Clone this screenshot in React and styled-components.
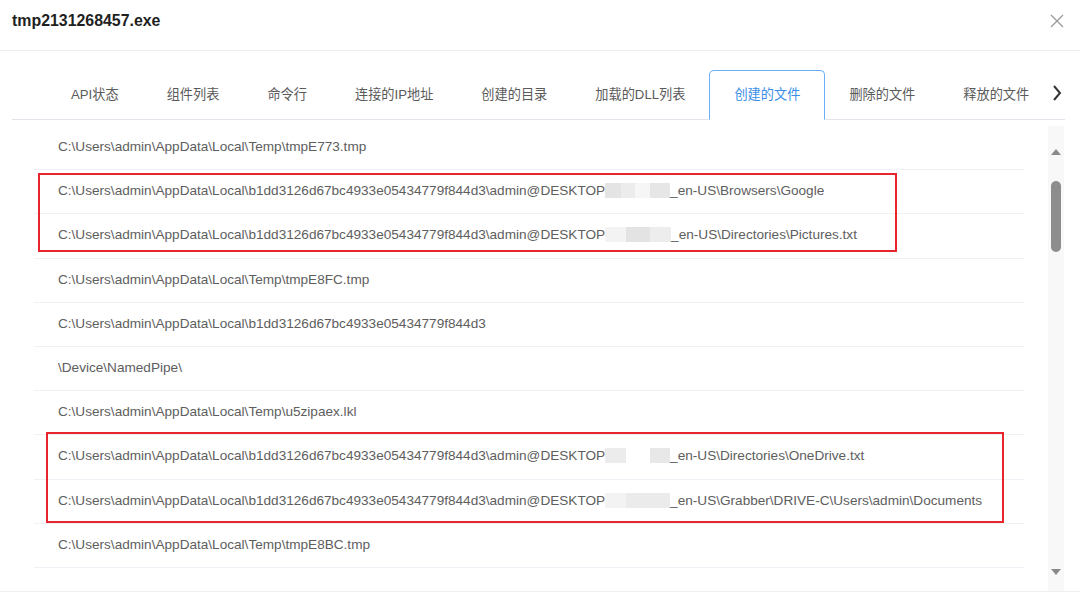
import React from "react";
import styled, { createGlobalStyle } from "styled-components";

const Global = createGlobalStyle`
  html, body { margin: 0; padding: 0; background: #fff; }
  body { font-family: "Liberation Sans", Arial, "Noto Sans CJK SC", sans-serif; }
  * { box-sizing: border-box; }
`;

const tabs = ["API状态", "组件列表", "命令行", "连接的IP地址", "创建的目录", "加载的DLL列表", "创建的文件", "删除的文件", "释放的文件"];
const ACTIVE = 6;

const base = "C:\\Users\\admin\\AppData\\Local\\";
const hash = base + "b1dd3126d67bc4933e05434779f844d3";
const desk = hash + "\\admin@DESKTOP";

const rows = [
  { text: base + "Temp\\tmpE773.tmp" },
  { text: desk, blur: [[16, "#e4e4e4"], [14, "#ececec"], [15, "#f6f6f6"], [20, "#e6e6e6"]], after: "_en-US\\Browsers\\Google" },
  { text: desk, blur: [[21, "#f3f3f3"], [24, "#e3e3e3"], [21, "#ededed"]], after: "_en-US\\Directories\\Pictures.txt" },
  { text: base + "Temp\\tmpE8FC.tmp" },
  { text: hash },
  { text: "\\Device\\NamedPipe\\" },
  { text: base + "Temp\\u5zipaex.lkl" },
  { text: desk, blur: [[21, "#ececec"], [24, "transparent"], [20, "#e8e8e8"]], after: "_en-US\\Directories\\OneDrive.txt" },
  { text: desk, blur: [[21, "#f3f3f3"], [44, "#ebebeb"]], after: "_en-US\\Grabber\\DRIVE-C\\Users\\admin\\Documents" },
  { text: base + "Temp\\tmpE8BC.tmp" },
];

const Page = styled.div`
  width: 1080px;
  height: 599px;
  overflow: hidden;
  background: #fff;
  display: flex;
  flex-direction: column;
`;

const Header = styled.div`
  height: 51px;
  display: flex;
  align-items: center;
  justify-content: space-between;
  padding: 0 16px 9px 12px;
  border-bottom: 1px solid #ededed;
`;

const Title = styled.h1`
  margin: 0;
  font-size: 15.9px;
  font-weight: bold;
  color: #1f1f1f;
`;

const CloseBtn = styled.div`
  width: 14px;
  height: 14px;
  display: flex;
`;

const TabBar = styled.div`
  margin: 19px 15px 0 12px;
  height: 50px;
  display: flex;
  align-items: flex-end;
  padding-left: 35px;
  border-bottom: 1px solid #e1e4ea;
  position: relative;
`;

const Tab = styled.div`
  height: 50px;
  padding: 0 ${p => (p.$active ? 24 : 23)}px 3px;
  display: flex;
  align-items: center;
  font-family: "Liberation Sans", "Noto Sans CJK SC", sans-serif;
  font-size: 13.2px;
  color: ${p => (p.$active ? "#3a8ee6" : "#5a5a5a")};
  white-space: nowrap;
  border: 1px solid ${p => (p.$active ? "#6aaef5" : "transparent")};
  border-bottom: ${p => (p.$active ? "1px solid #fff" : "none")};
  border-radius: 5px 5px 0 0;
  margin-bottom: ${p => (p.$active ? "-1px" : "0")};
  background: #fff;
`;

const NextArrow = styled.div`
  position: absolute;
  right: 2px;
  top: 14px;
  width: 12px;
  height: 18px;
  display: flex;
`;

const Body = styled.div`
  flex: 1;
  display: flex;
  padding: 6px 16px 0 34px;
  border-bottom: 1px solid #efefef;
  margin-bottom: 7px;
`;

const List = styled.div`
  width: 990px;
  position: relative;
`;

const Row = styled.div`
  height: 44.2px;
  display: flex;
  align-items: center;
  padding-left: 24px;
  padding-bottom: 2px;
  border-bottom: 1px solid #eef0f5;
  font-size: 13.6px;
  color: #5e5e5e;
  white-space: nowrap;
`;

const Blur = styled.span`
  display: inline-block;
  width: ${p => p.$w}px;
  height: 15px;
  background: ${p => p.$c};
  vertical-align: middle;
`;

const Mark = styled.div`
  position: absolute;
  left: ${p => p.$l}px;
  top: ${p => p.$t}px;
  width: ${p => p.$w}px;
  height: ${p => p.$h}px;
  border: 2px solid #e8242c;
  pointer-events: none;
`;

const Track = styled.div`
  margin-left: 24px;
  width: 16px;
  background: #f8f8f8;
  display: flex;
  flex-direction: column;
  align-items: center;
  padding: 23px 0 16px;
`;

const Thumb = styled.div`
  width: 10px;
  height: 71px;
  border-radius: 5px;
  background: #8d8d8d;
  margin-top: 26px;
`;

const Spacer = styled.div`
  flex: 1;
`;

const Tri = ({ up }) => (
  <svg width="10" height="6" viewBox="0 0 10 6">
    <path d={up ? "M0 6 L5 0 L10 6 Z" : "M0 0 L5 6 L10 0 Z"} fill="#8a8a8a" />
  </svg>
);

export default function App() {
  return (
    <Page>
      <Global />
      <Header>
        <Title>tmp2131268457.exe</Title>
        <CloseBtn>
          <svg width="14" height="14" viewBox="0 0 14 14">
            <path d="M1 1 L13 13 M13 1 L1 13" stroke="#9a9a9a" strokeWidth="1.3" />
          </svg>
        </CloseBtn>
      </Header>
      <TabBar>
        {tabs.map((t, i) => (
          <Tab key={t} $active={i === ACTIVE}>{t}</Tab>
        ))}
        <NextArrow>
          <svg width="12" height="18" viewBox="0 0 12 18">
            <path d="M3 2 L9 9 L3 16" stroke="#333" strokeWidth="2" fill="none" />
          </svg>
        </NextArrow>
      </TabBar>
      <Body>
        <List>
          {rows.map((r, i) => (
            <Row key={i}>
              {r.text}
              {r.blur && r.blur.map(([w, c], j) => <Blur key={j} $w={w} $c={c} />)}
              {r.after}
            </Row>
          ))}
          <Mark $l={4} $t={47} $w={859} $h={79} />
          <Mark $l={12} $t={306} $w={958} $h={91} />
        </List>
        <Track>
          <Tri up />
          <Thumb />
          <Spacer />
          <Tri />
        </Track>
      </Body>
    </Page>
  );
}
